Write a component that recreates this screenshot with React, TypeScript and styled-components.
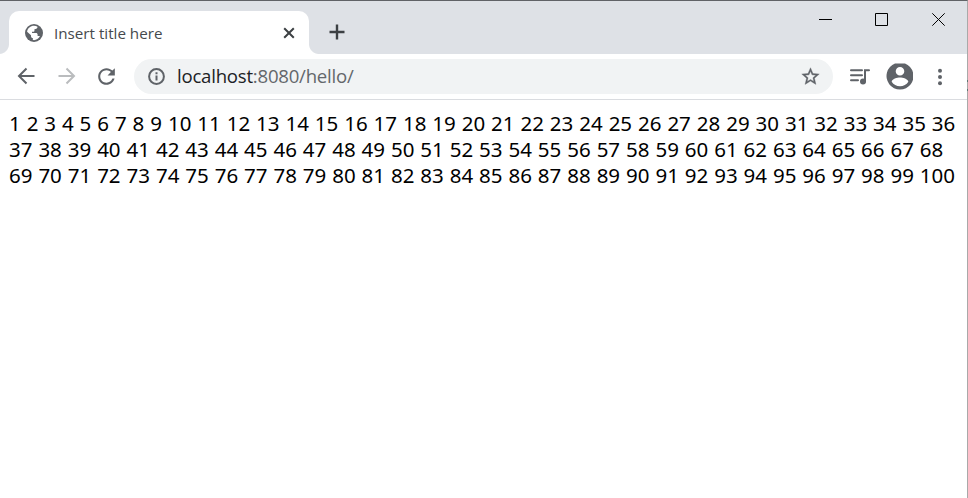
import React from "react";
import styled, { createGlobalStyle } from "styled-components";

const Global = createGlobalStyle`
  * { box-sizing: border-box; }
  body { margin: 0; background: #fff; overflow: hidden; }
`;

const Window = styled.div`
  position: relative;
  width: 968px;
  height: 498px;
  display: flex;
  flex-direction: column;
  background: #fff;
  border-top: 1px solid #606266;
  border-right: 1px solid #a9a9a9;
  font-family: "Noto Sans", sans-serif;
`;

const EdgeMark = styled.span<{ $top: number }>`
  position: absolute;
  right: -1px;
  top: ${(p) => p.$top}px;
  width: 1px;
  height: 2px;
  background: #5d7675;
`;

const TabStrip = styled.header`
  height: 53px;
  flex: none;
  display: flex;
  align-items: flex-start;
  background: #dee1e6;
`;

const Tab = styled.div`
  position: relative;
  width: 300px;
  height: 43px;
  margin: 10px 0 0 9px;
  padding: 0 12px 0 16px;
  display: flex;
  align-items: center;
  background: #fff;
  border-radius: 10px 10px 0 0;
`;

const Flare = styled.span<{ $side: "left" | "right" }>`
  position: absolute;
  bottom: 0;
  ${(p) => p.$side}: -10px;
  width: 10px;
  height: 10px;
  background: radial-gradient(
    circle at ${(p) => (p.$side === "left" ? "0 0" : "100% 0")},
    transparent 9.5px,
    #fff 10.5px
  );
`;

const TabTitle = styled.span`
  flex: 1;
  margin-left: 11px;
  font-family: "Open Sans", sans-serif;
  font-size: 15.2px;
  line-height: 22px;
  white-space: nowrap;
  color: #45494d;
`;

const NewTab = styled.div`
  margin: 23px 0 0 19.5px;
  display: flex;
`;

const Controls = styled.div`
  margin: 12px 22px 0 auto;
  display: flex;
  gap: 43px;
`;

const CloseSlot = styled.div`
  margin-left: 1px;
`;

const Toolbar = styled.nav`
  height: 46px;
  flex: none;
  display: flex;
  align-items: center;
  padding: 0 15px 0 14px;
  border-bottom: 1px solid #dadce0;
`;

const NavButtons = styled.div`
  display: flex;
  gap: 16px;
  margin-right: 15px;
`;

const Omnibox = styled.div`
  width: 699px;
  height: 35px;
  display: flex;
  align-items: center;
  padding: 0 12.5px 0 12px;
  border-radius: 18px;
  background: #f1f3f4;
`;

const Url = styled.span`
  flex: 1;
  margin: 0 0 1px 10px;
  font-family: "Open Sans", sans-serif;
  font-size: 18.6px;
  letter-spacing: -0.23px;
  line-height: 26px;
  color: #63676b;
`;

const Host = styled.span`
  color: #202124;
`;

const Actions = styled.div`
  display: flex;
  align-items: center;
  margin-left: auto;
  gap: 15px;
`;

const Icon = styled.svg<{ $size: number; $color?: string }>`
  display: block;
  flex: none;
  width: ${(p) => p.$size}px;
  height: ${(p) => p.$size}px;
  fill: ${(p) => p.$color ?? "#5f6368"};
`;

const LineIcon = styled(Icon)`
  fill: none;
  stroke: ${(p) => p.$color ?? "#5f6368"};
`;

const Page = styled.main`
  padding: 10px 0 0 9px;
`;

const Line = styled.div`
  font-size: 20.5px;
  line-height: 26px;
  word-spacing: 0.6px;
  white-space: nowrap;
  color: #000;
`;

const rows: [number, number][] = [
  [1, 36],
  [37, 68],
  [69, 100],
];

const range = (a: number, b: number) =>
  Array.from({ length: b - a + 1 }, (_, i) => a + i).join(" ");

export default function App() {
  return (
    <>
      <Global />
      <Window>
        <EdgeMark $top={79} />
        <EdgeMark $top={88} />
        <TabStrip>
          <Tab>
            <Flare $side="left" />
            <Flare $side="right" />
            <Icon viewBox="2 2 20 20" $size={18}>
              <circle cx="12" cy="12" r="10" />
              <path
                fill="#fff"
                d="M12 4c1.500 0 2.800.3 3.900.95 0 1.450-.9 2.350-2.200 2.550l-1.200.2v1.700c0 .7-.5 1.200-1.300 1.200H9.800v1.300h4.300c1.200 0 1.900.7 1.900 1.800v1.500h1.400c.5 0 .9.2 1.200.5C17.200 18.300 14.800 20 12 20c-.5 0-.9 0-1.300-.1v-2.300c-1.300 0-2-.9-2-2v-1.200L4.300 10.600C4.900 6.800 8.100 4 12 4z"
              />
            </Icon>
            <TabTitle>Insert title here</TabTitle>
            <LineIcon viewBox="0 0 16 16" $size={16} $color="#3c4043" strokeWidth="2">
              <path d="M3.200 3.200l9.600 9.600M12.800 3.200L3.200 12.800" />
            </LineIcon>
          </Tab>
          <NewTab>
            <LineIcon viewBox="0 0 16 16" $size={16} $color="#3c4043" strokeWidth="2.4">
              <path d="M8 .5v15M.5 8h15" />
            </LineIcon>
          </NewTab>
          <Controls>
            <LineIcon viewBox="0 0 13 13" $size={13} $color="#000">
              <path d="M0 6.500h13" />
            </LineIcon>
            <LineIcon viewBox="0 0 13 13" $size={13} $color="#000">
              <path d="M.5.5h12v12H.5z" />
            </LineIcon>
            <CloseSlot>
              <LineIcon viewBox="0 0 13 13" $size={13} $color="#000">
                <path d="M.3.3l12.400 12.400M12.700.3L.3 12.700" />
              </LineIcon>
            </CloseSlot>
          </Controls>
        </TabStrip>
        <Toolbar>
          <NavButtons>
            <LineIcon viewBox="0 0 24 24" $size={24} strokeWidth="2">
              <path d="M20.500 12H5.500M12.500 4.500L5 12l7.500 7.500" />
            </LineIcon>
            <LineIcon viewBox="0 0 24 24" $size={24} $color="#babcbe" strokeWidth="2">
              <path d="M4.500 12h15M12.500 4.500L20 12l-7.500 7.500" />
            </LineIcon>
            <Icon viewBox="0 0 24 24" $size={25}>
              <path d="M17.650 6.350C16.200 4.900 14.210 4 12 4c-4.420 0-7.990 3.580-7.990 8s3.570 8 7.990 8c3.730 0 6.840-2.550 7.730-6h-2.080c-.82 2.330-3.040 4-5.650 4-3.310 0-6-2.690-6-6s2.690-6 6-6c1.660 0 3.140.69 4.220 1.780L13 11h7V4l-2.350 2.350z" />
            </Icon>
          </NavButtons>
          <Omnibox>
            <LineIcon viewBox="0 0 21 21" $size={21} strokeWidth="2">
              <circle cx="10.500" cy="10.500" r="7.400" />
              <path d="M10.500 9.500v5M10.500 6.200v2" />
            </LineIcon>
            <Url>
              <Host>localhost</Host>:8080/hello/
            </Url>
            <Icon viewBox="0 0 24 24" $size={21}>
              <path
                stroke="#5f6368"
                strokeWidth=".4"
                d="M22 9.240l-7.190-.62L12 2 9.190 8.630 2 9.240l5.460 4.730L5.820 21 12 17.270 18.180 21l-1.630-7.030L22 9.240zM12 15.400l-3.760 2.270 1-4.280-3.320-2.880 4.380-.38L12 6.100l1.710 4.040 4.380.38-3.320 2.880 1 4.280L12 15.400z"
              />
            </Icon>
          </Omnibox>
          <Actions>
            <LineIcon viewBox="0 0 22 22" $size={22} strokeWidth="2" strokeLinecap="round">
              <path d="M2 4.300h11M2 9.300h11M2 14.300h7M16 15.500V4.300h4" />
              <circle cx="14" cy="15.500" r="3" fill="#5f6368" stroke="none" />
            </LineIcon>
            <Icon viewBox="-.5 -.5 27 27" $size={27}>
              <path
                fillRule="evenodd"
                d="M8.500 0h10A13.500 13.500 0 1 1 8.500 0zM13.500 3.500a4.300 4.300 0 1 0 0 8.600 4.300 4.300 0 0 0 0-8.600zM5.200 18.200c1.800 2.800 4.800 4.600 8.300 4.600s6.500-1.800 8.300-4.600c-.1-2.700-5.500-4.200-8.300-4.200s-8.200 1.500-8.300 4.200z"
              />
            </Icon>
            <Icon viewBox="0 0 24 24" $size={24}>
              <circle cx="12" cy="5.700" r="2" />
              <circle cx="12" cy="12" r="2" />
              <circle cx="12" cy="18.300" r="2" />
            </Icon>
          </Actions>
        </Toolbar>
        <Page>
          {rows.map(([a, b]) => (
            <Line key={a}>{range(a, b)}</Line>
          ))}
        </Page>
      </Window>
    </>
  );
}
